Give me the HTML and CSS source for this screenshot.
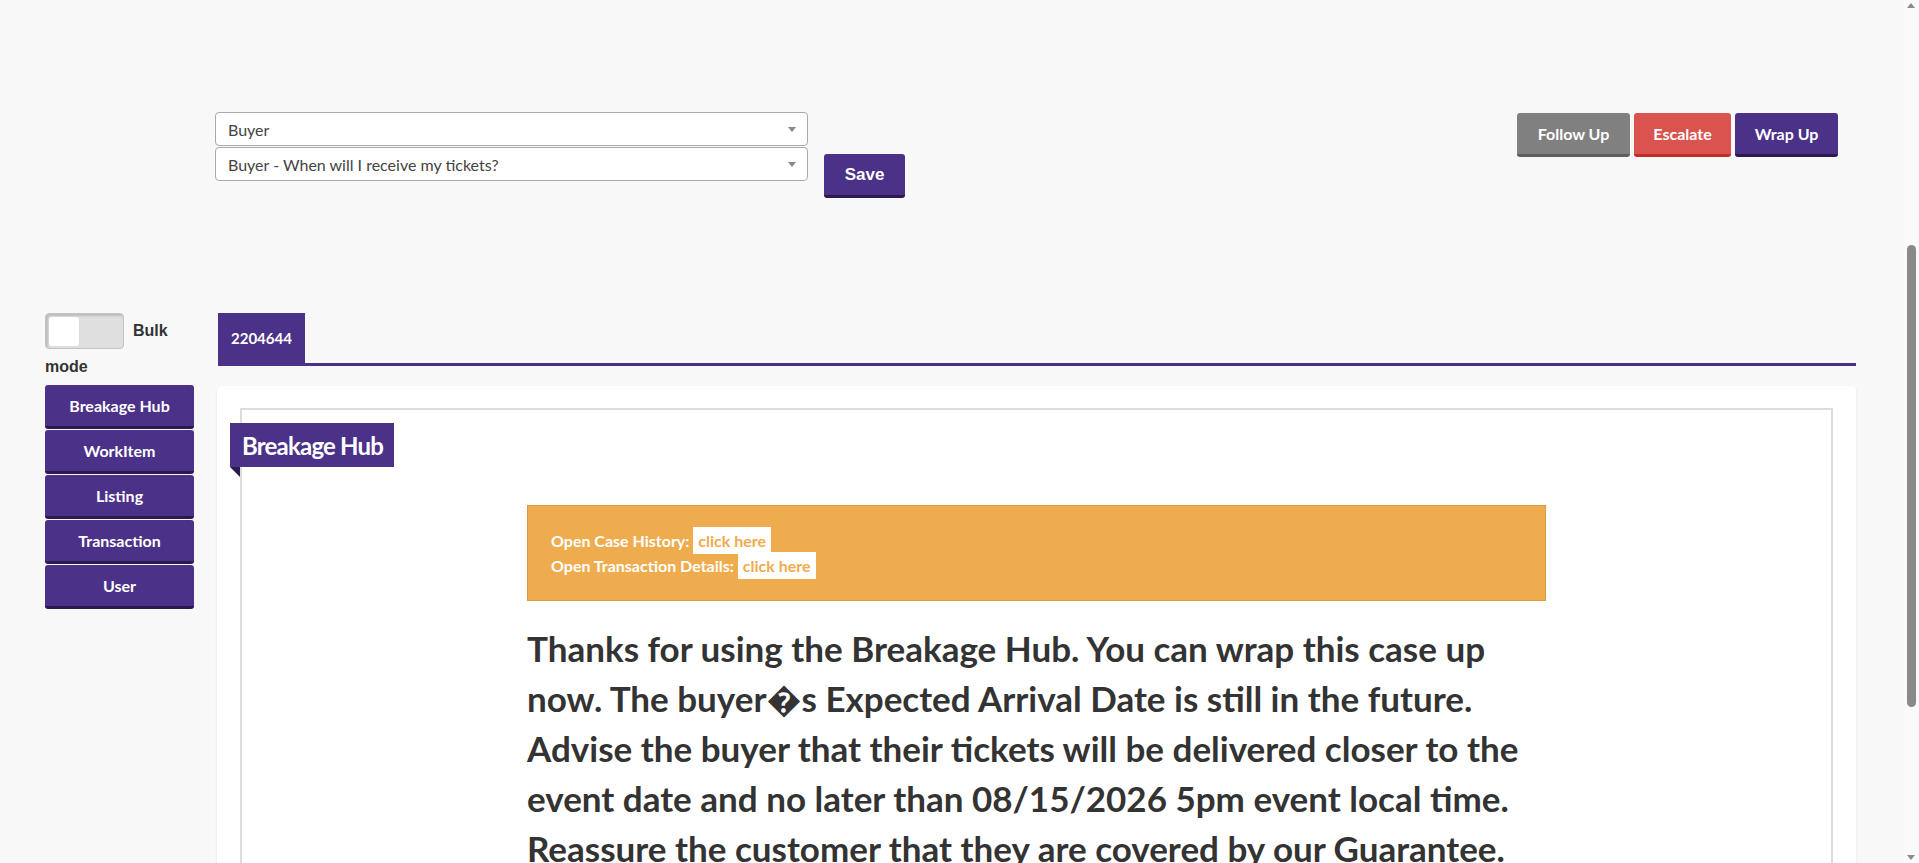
FILE: index.html
```html
<!DOCTYPE html>
<html lang="en">
<head>
<meta charset="utf-8">
<title>Breakage Hub</title>
<link rel="stylesheet" href="styles.css">
</head>
<body>
<header class="topbar">
  <div class="case-form">
    <div class="selects">
      <div class="select"><span class="select-text">Buyer</span><i class="caret"></i></div>
      <div class="select"><span class="select-text">Buyer - When will I receive my tickets?</span><i class="caret"></i></div>
    </div>
    <button class="btn btn-save">Save</button>
  </div>
  <div class="actions">
    <button class="btn btn-gray">Follow Up</button>
    <button class="btn btn-red">Escalate</button>
    <button class="btn btn-purple">Wrap Up</button>
  </div>
</header>
<div class="main">
  <aside class="sidebar">
    <div class="bulk"><span class="toggle"><span class="knob"></span></span>Bulk mode</div>
    <nav class="nav">
      <button class="nav-btn">Breakage Hub</button>
      <button class="nav-btn">WorkItem</button>
      <button class="nav-btn">Listing</button>
      <button class="nav-btn">Transaction</button>
      <button class="nav-btn">User</button>
    </nav>
  </aside>
  <section class="content">
    <div class="tabs"><div class="tab">2204644</div></div>
    <div class="card">
      <div class="panel">
        <div class="ribbon">Breakage Hub</div>
        <div class="notice">
          <div>Open Case History: <span class="link">click here</span></div>
          <div>Open Transaction Details: <span class="link">click here</span></div>
        </div>
        <p class="message">Thanks for using the Breakage Hub. You can wrap this case up now. The buyer�s Expected Arrival Date is still in the future. Advise the buyer that their tickets will be delivered closer to the event date and no later than 08/15/2026 5pm event local time. Reassure the customer that they are covered by our Guarantee.</p>
      </div>
    </div>
  </section>
</div>
<div class="scrollbar" aria-hidden="true">
  <span class="sb-arrow sb-up"></span>
  <span class="sb-thumb"></span>
  <span class="sb-arrow sb-down"></span>
</div>
</body>
</html>
```

FILE: styles.css
```css
* { box-sizing: border-box; }
html, body { margin: 0; padding: 0; }
body {
  background: #f8f8f8;
  font-family: Lato, "Open Sans", sans-serif;
  color: #333;
}
.topbar {
  display: flex;
  justify-content: space-between;
  align-items: flex-start;
  padding: 112px 81px 0 215px;
}
.case-form { display: flex; align-items: flex-start; }
.selects { width: 593px; display: flex; flex-direction: column; gap: 1px; }
.select {
  height: 34px;
  background: #fff;
  border: 1px solid #aaa;
  border-radius: 4px;
  display: flex;
  align-items: center;
  justify-content: space-between;
  padding: 0 11px 0 12px;
  font-family: Lato, sans-serif;
  font-size: 16px;
  color: #444;
}
.caret {
  width: 0; height: 0;
  border-left: 4px solid transparent;
  border-right: 4px solid transparent;
  border-top: 5px solid #888;
}
.btn {
  border: 0;
  border-radius: 3px;
  color: #fff;
  font-family: Lato, sans-serif;
  font-weight: 700;
  font-size: 16px;
  height: 44px;
  padding: 0;
  cursor: pointer;
}
.btn-save {
  margin: 42px 0 0 16px;
  width: 81px;
  background: #4b3188;
  border-bottom: 3px solid #2a1a50;
  font-family: "Liberation Sans", Arial, sans-serif;
  font-size: 17px;
}
.actions { display: flex; gap: 4px; margin-top: 1px; }
.btn-gray { width: 113px; background: #808080; border-bottom: 3px solid #5e5e5e; }
.btn-red { width: 97px; background: #d9534f; border-bottom: 3px solid #c12e2a; }
.btn-purple { width: 103px; background: #4b3188; border-bottom: 3px solid #2a1a50; }

.main {
  display: flex;
  gap: 23px;
  margin-top: 115px;
  padding: 0 63px 0 45px;
}
.sidebar { width: 149px; flex: none; }
.bulk {
  font-family: "Liberation Sans", Arial, sans-serif;
  font-weight: 700;
  font-size: 16px;
  line-height: 36px;
  color: #333;
}
.toggle {
  display: inline-block;
  vertical-align: top;
  width: 79px;
  height: 36px;
  margin-right: 9px;
  background: #dedede;
  border-radius: 4px;
  border: 1px solid #c4c4c4;
  box-shadow: inset 2px 2px 2px rgba(0,0,0,0.15);
  position: relative;
}
.knob {
  position: absolute;
  left: 3px; top: 3px;
  width: 30px; height: 29px;
  background: #fff;
  border-radius: 3px;
}
.nav { display: flex; flex-direction: column; gap: 1px; }
.nav-btn {
  height: 44px;
  border: 0;
  border-radius: 3px;
  border-bottom: 3px solid #2a1a50;
  background: #4b3188;
  color: #fff;
  font-family: Lato, sans-serif;
  font-weight: 700;
  font-size: 16px;
  padding: 0;
}
.content { flex: 1; min-width: 0; }
.tabs {
  display: flex;
  border-bottom: 3px solid #4b3188;
  margin-left: 1px;
}
.tab {
  height: 50px;
  padding: 0 13px;
  background: #4b3188;
  color: #fff;
  font-weight: 700;
  font-size: 15px;
  display: flex;
  align-items: center;
}
.card {
  margin-top: 20px;
  background: #fff;
  border-radius: 4px;
  box-shadow: 0 1px 3px rgba(0,0,0,0.08);
  padding: 22px 23px 30px;
}
.panel {
  position: relative;
  border: 2px solid #dddddd;
  padding: 95px 0 40px;
}
.ribbon {
  position: absolute;
  top: 13px;
  left: -12px;
  height: 44px;
  padding: 0 11px 0 12px;
  background: #4b3188;
  color: #fff;
  font-weight: 700;
  font-size: 24px;
  letter-spacing: -0.8px;
  display: flex;
  align-items: center;
}
.ribbon::after {
  content: "";
  position: absolute;
  top: 100%;
  left: 0;
  border-top: 10px solid #2b1a4f;
  border-left: 10px solid transparent;
}
.notice {
  width: 1019px;
  margin: 0 auto;
  background: #efac4e;
  border: 1px solid #d99b3f;
  padding: 22px 20px 22px 23px;
  color: #fff;
  font-weight: 700;
  font-size: 16px;
  line-height: 25px;
}
.link {
  background: #fff;
  color: #efac4e;
  padding: 4px 5px;
}
.message {
  width: 1019px;
  margin: 22px auto 0;
  font-weight: 700;
  font-size: 35px;
  line-height: 50px;
  color: #333;
}
.scrollbar {
  position: fixed;
  top: 0;
  right: 0;
  width: 15px;
  height: 100vh;
  background: #fafafa;
}
.sb-thumb {
  position: absolute;
  left: 3px;
  top: 245px;
  width: 9px;
  height: 462px;
  border-radius: 5px;
  background: #8a8a8a;
}
.sb-arrow {
  position: absolute;
  left: 3px;
  width: 0;
  height: 0;
  border-left: 4.5px solid transparent;
  border-right: 4.5px solid transparent;
}
.sb-up { top: 3px; border-bottom: 5px solid #8a8a8a; }
.sb-down { bottom: 3px; border-top: 5px solid #8a8a8a; }
```
